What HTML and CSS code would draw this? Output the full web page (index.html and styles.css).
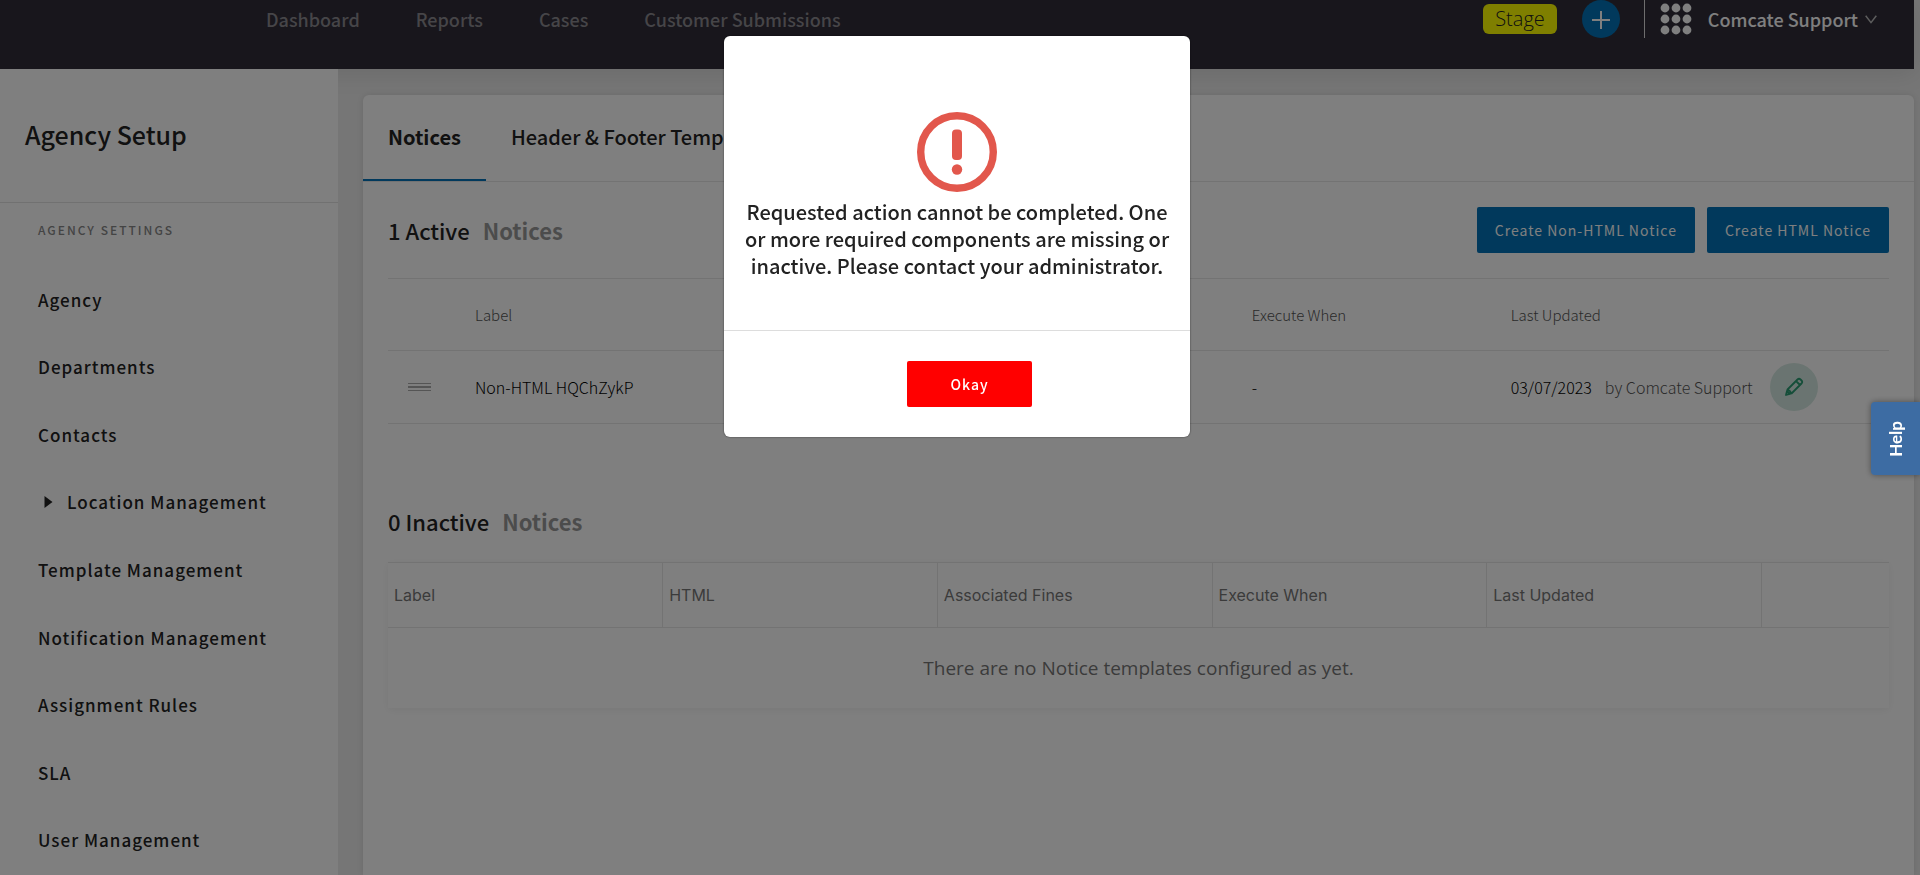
FILE: index.html
```html
<!DOCTYPE html>
<html lang="en">
<head>
<meta charset="utf-8">
<title>Agency Setup - Notices</title>
<link rel="stylesheet" href="styles.css">
</head>
<body>
<div class="page">
  <header class="topbar">
    <nav class="topnav">
      <a href="#">Dashboard</a>
      <a href="#">Reports</a>
      <a href="#">Cases</a>
      <a href="#">Customer Submissions</a>
    </nav>
    <div class="tools">
      <span class="stage">Stage</span>
      <button class="add" type="button" aria-label="Add">
        <svg width="38" height="38" viewBox="0 0 38 38"><path d="M19 11v18M10 20h18" stroke="#fff" stroke-width="2" fill="none"/></svg>
      </button>
      <span class="divider"></span>
      <button class="apps" type="button" aria-label="Apps">
        <svg width="30" height="30" viewBox="0 0 30 30" fill="#fff"><circle cx="4" cy="4" r="4.4"/><circle cx="15" cy="4" r="4.4"/><circle cx="26" cy="4" r="4.4"/><circle cx="4" cy="15" r="4.4"/><circle cx="15" cy="15" r="4.4"/><circle cx="26" cy="15" r="4.4"/><circle cx="4" cy="26" r="4.4"/><circle cx="15" cy="26" r="4.4"/><circle cx="26" cy="26" r="4.4"/></svg>
      </button>
      <button class="user" type="button">Comcate Support
        <svg width="12" height="9" viewBox="0 0 12 9"><path d="M.7 .7L6 7.600L11.300 .7" stroke="#bbb" stroke-width="1.500" fill="none"/></svg>
      </button>
    </div>
  </header>
  <div class="body">
    <aside class="sidebar">
      <h1 class="sidebar-title">Agency Setup</h1>
      <h2 class="sidebar-group">AGENCY SETTINGS</h2>
      <ul class="menu">
        <li><a href="#">Agency</a></li>
        <li><a href="#">Departments</a></li>
        <li><a href="#">Contacts</a></li>
        <li><a href="#"><svg class="caret" width="9" height="12" viewBox="0 0 9 12"><path d="M.5 0L8.500 6L.5 12z" fill="#222"/></svg>Location Management</a></li>
        <li><a href="#">Template Management</a></li>
        <li><a href="#">Notification Management</a></li>
        <li><a href="#">Assignment Rules</a></li>
        <li><a href="#">SLA</a></li>
        <li><a href="#">User Management</a></li>
      </ul>
    </aside>
    <main class="panel">
      <nav class="tabs">
        <a class="tab tab-active" href="#">Notices</a>
        <a class="tab" href="#">Header &amp; Footer Templates</a>
      </nav>
      <section class="section">
        <div class="section-head">
          <h2 class="count">1 Active <span>Notices</span></h2>
          <div class="actions">
            <button class="btn" type="button">Create Non-HTML Notice</button>
            <button class="btn" type="button">Create HTML Notice</button>
          </div>
        </div>
        <table class="active-table">
          <colgroup><col class="c-drag"><col class="c-data"><col class="c-data"><col class="c-data"><col class="c-data"><col></colgroup>
          <thead><tr><th></th><th>Label</th><th></th><th></th><th>Execute When</th><th>Last Updated</th></tr></thead>
          <tbody><tr>
            <td><svg class="drag" width="23" height="9" viewBox="0 0 23 9"><path d="M0 .5h23M0 3.500h23M0 4.500h23M0 7.500h23" stroke="#aaa" stroke-width="1"/></svg></td>
            <td>Non-HTML HQChZykP</td><td></td><td></td><td>-</td>
            <td><div class="updated">03/07/2023 <span class="by">by Comcate Support</span>
              <button class="edit" type="button" aria-label="Edit"><svg width="20" height="20" viewBox="0 0 20 20"><path d="M2 18l1.500-5.500L13.500 2.500q1.500-1.500 3 0l1 1q1.500 1.500 0 3L7.500 16.500zM12 4l4 4M3.500 12.500q2.500.8 4 4M2 18l1-4 2.800 2.800z" fill="none" stroke="#2a9c73" stroke-width="1.800" stroke-linejoin="round"/></svg></button></div></td>
          </tr></tbody>
        </table>
      </section>
      <section class="section section-inactive">
        <h2 class="count">0 Inactive <span>Notices</span></h2>
        <table class="inactive-table">
          <colgroup><col class="c-cell"><col class="c-cell"><col class="c-cell"><col class="c-cell"><col class="c-cell"><col></colgroup>
          <thead><tr><th>Label</th><th>HTML</th><th>Associated Fines</th><th>Execute When</th><th>Last Updated</th><th></th></tr></thead>
          <tbody><tr><td colspan="6">There are no Notice templates configured as yet.</td></tr></tbody>
        </table>
      </section>
    </main>
  </div>
</div>
<div class="overlay">
  <div class="modal" role="alertdialog" aria-modal="true" aria-labelledby="message">
    <div class="modal-body">
      <svg class="alert" width="80" height="80" viewBox="0 0 80 80"><circle cx="40" cy="40" r="36.300" fill="none" stroke="#e2574c" stroke-width="7.400"/><rect x="35" y="17.500" width="10" height="30.500" rx="4" fill="#e2574c"/><circle cx="40" cy="57.500" r="5.200" fill="#e2574c"/></svg>
      <p class="message" id="message">Requested action cannot be completed. One or more required components are missing or inactive. Please contact your administrator.</p>
    </div>
    <div class="modal-foot"><button class="okay" type="button">Okay</button></div>
  </div>
</div>
<button class="help" type="button">Help</button>
</body>
</html>
```
FILE: styles.css
```css
* { box-sizing: border-box; }
body {
  margin: 0;
  background: #ececec;
  color: #222;
  font-family: "Noto Sans CJK SC", "Noto Sans", sans-serif;
  font-size: 16px;
  line-height: 24px;
  overflow: hidden;
}
a { color: inherit; text-decoration: none; }
button { font: inherit; border: 0; padding: 0; cursor: pointer; }
svg { display: block; }
h1, h2, p, ul { margin: 0; padding: 0; }

.page { display: flex; flex-direction: column; height: 100vh; padding-right: 6px; }
.topbar {
  display: flex;
  justify-content: space-between;
  align-items: flex-start;
  height: 69px;
  flex: none;
  padding: 0 37px 0 266px;
  background: #302d39;
  box-shadow: 0 4px 24px rgba(0, 0, 0, .1);
}
.topnav { display: flex; gap: 56px; font-size: 18px; font-weight: 500; line-height: 38px; color: #8c8a90; }
.tools { display: flex; align-items: center; height: 38px; }
.stage {
  padding: 0 12px;
  border-radius: 6px;
  background: #ff0;
  font-family: "Open Sans", sans-serif;
  font-size: 20px;
  font-weight: 300;
  line-height: 30px;
}
.add { margin-left: 25px; border-radius: 50%; background: #0273b8; }
.divider { width: 1px; height: 38px; margin: 0 16px 0 24px; background: #ddd; }
.apps { background: none; }
.apps svg { overflow: visible; }
.user { display: flex; align-items: center; gap: 7px; margin-left: 17px; background: none; color: #fff; font-size: 18px; font-weight: 500; }

.body { display: flex; flex: 1; min-height: 0; }
.sidebar { width: 338px; flex: none; background: #fff; position: relative; }
.sidebar-title { padding: 48px 25px 50px; border-bottom: 1px solid #e2e2e2; font-size: 25px; font-weight: 500; line-height: 35px; }
.sidebar-group { padding: 15px 38px 24px; font-size: 12px; font-weight: 500; line-height: 24px; letter-spacing: 2px; color: #888; }
.menu { display: grid; grid-auto-rows: 1fr; min-height: 608px; list-style: none; font-size: 17px; font-weight: 500; letter-spacing: 1px; }
.menu li { display: flex; align-items: center; padding-left: 38px; }
.menu a { display: flex; align-items: center; }
.caret { margin: 0 14px 0 6px; }

.panel { flex: 1; min-width: 0; margin: 26px 0 0 25px; border-radius: 6px 6px 0 0; background: #fff; box-shadow: 0 0 6px rgba(0, 0, 0, .1); }
.tabs { display: flex; border-bottom: 1px solid #e6e6e6; font-size: 20px; line-height: 84px; font-weight: 500; }
.tab { padding: 0 25px; border-bottom: 2px solid transparent; }
.tab-active { border-color: #0273b8; font-weight: 700; }
.section { padding: 0 25px; }
.section-head { display: flex; justify-content: space-between; align-items: center; height: 96px; }
.count { display: flex; gap: 13px; font-size: 22px; font-weight: 500; line-height: 32px; }
.count span { color: #999; font-weight: 700; }
.actions { display: flex; gap: 12px; }
.btn { height: 46px; padding: 0 18px; border-radius: 2px; background: #0273b8; color: #fff; font-size: 14px; letter-spacing: 1px; }

table { width: 100%; border-collapse: collapse; table-layout: fixed; }
th, td { padding: 0; text-align: left; font-weight: 400; }
.active-table { font-weight: 300; color: #000; }
.active-table tr { border-top: 1px solid #e6e6e6; }
.active-table tbody tr { border-bottom: 1px solid #e6e6e6; }
.active-table th { height: 72px; font-size: 15px; font-weight: inherit; color: #555; }
.active-table td { height: 73px; font-weight: inherit; }
.c-drag { width: 5.8%; }
.c-data { width: 17.25%; }
.drag { margin-left: 20px; }
.updated { display: flex; align-items: center; }
.by { margin: 0 17px 0 13px; color: #555; }
.edit { display: grid; place-items: center; width: 48px; height: 48px; border-radius: 50%; background: #d5e9e2; }

.section-inactive { padding-top: 81px; }
.inactive-table { margin-top: 25px; border-top: 1px solid #e6e6e6; box-shadow: 0 2px 8px rgba(0, 0, 0, .06); }
.inactive-table th { height: 65px; padding: 0 6px; border-right: 1px solid #e6e6e6; border-bottom: 1px solid #e6e6e6; font-family: Inter, sans-serif; font-size: 16px; color: #777; }
.inactive-table th:last-child { border-right: 0; }
.inactive-table td { height: 80px; text-align: center; font-family: "Open Sans", sans-serif; font-size: 19px; color: #777; }
.c-cell { width: 18.3%; }

.overlay { position: fixed; inset: 0; display: flex; justify-content: center; align-items: flex-start; padding: 36px 6px 0 0; background: rgba(0, 0, 0, .5); }
.modal { width: 466px; border-radius: 6px; background: #fff; box-shadow: 0 0 2px rgba(0, 0, 0, .6); }
.modal-body { display: flex; flex-direction: column; align-items: center; padding: 76px 16px 51px; border-bottom: 1px solid #ddd; }
.message { margin-top: 6px; text-align: center; font-size: 20px; font-weight: 500; line-height: 27px; }
.modal-foot { display: flex; justify-content: center; padding: 30px 0 30px 25px; }
.okay { width: 125px; height: 46px; border-radius: 2px; background: #f00; color: #fff; font-size: 14px; font-weight: 500; letter-spacing: 1px; }
.help {
  position: fixed;
  right: 0;
  top: 402px;
  width: 49px;
  height: 73px;
  border-radius: 4px 0 0 4px;
  background: #3d6ca3;
  color: #fff;
  box-shadow: 0 0 6px rgba(0, 0, 0, .4);
  font-family: Lato, sans-serif;
  font-size: 17px;
  font-weight: 700;
  writing-mode: sideways-lr;
}
```
